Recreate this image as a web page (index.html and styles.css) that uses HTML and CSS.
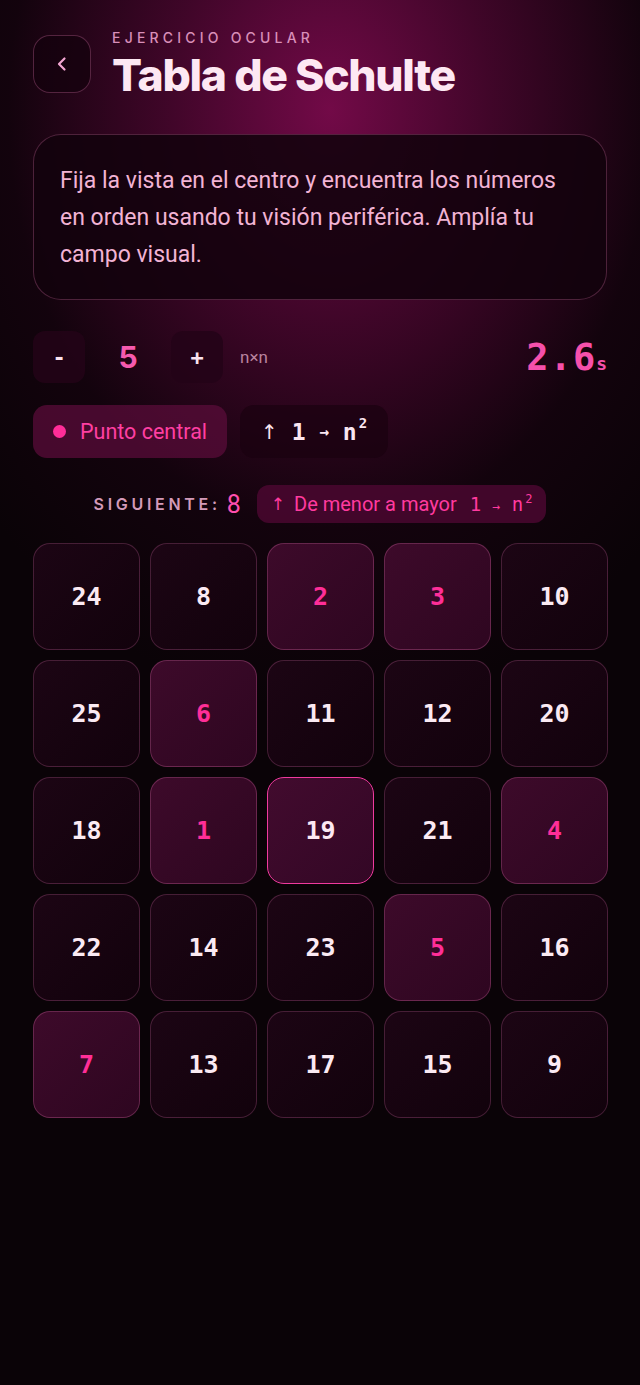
FILE: index.html
```html
<!DOCTYPE html>
<html lang="es">
<head>
<meta charset="utf-8">
<title>Tabla de Schulte</title>
<link rel="stylesheet" href="styles.css">
</head>
<body>
<div class="page">
  <header class="header">
    <button class="back" aria-label="Volver">
      <svg width="14" height="18" viewBox="0 0 14 18"><path d="M9.5 3.5 L4 9 L9.5 14.5" fill="none" stroke="#f3a6d2" stroke-width="2.2" stroke-linecap="round" stroke-linejoin="round"/></svg>
    </button>
    <div class="titles">
      <div class="eyebrow">EJERCICIO OCULAR</div>
      <h1 class="title">Tabla de Schulte</h1>
    </div>
  </header>

  <section class="card">
    <p>Fija la vista en el centro y encuentra los números en orden usando tu visión periférica. Amplía tu campo visual.</p>
  </section>

  <div class="controls">
    <button class="step">-</button>
    <span class="size">5</span>
    <button class="step">+</button>
    <span class="nxn">n×n</span>
    <span class="timer">2.6<small>s</small></span>
  </div>

  <div class="toggles">
    <div class="pill-on"><span class="dot"></span>Punto central</div>
    <div class="chip"><span class="arr">↑</span> 1 <span class="sm">→</span> n<span class="sup">2</span></div>
  </div>

  <div class="next">
    <span class="next-label">SIGUIENTE:</span>
    <span class="next-num">8</span>
    <span class="order"><span class="oarr">↑</span> De menor a mayor <span class="om">1 <span class="sm2">→</span> n<span class="sup2">2</span></span></span>
  </div>

  <div class="grid">
    <div class="cell">24</div>
    <div class="cell">8</div>
    <div class="cell found">2</div>
    <div class="cell found">3</div>
    <div class="cell">10</div>

    <div class="cell">25</div>
    <div class="cell found">6</div>
    <div class="cell">11</div>
    <div class="cell">12</div>
    <div class="cell">20</div>

    <div class="cell">18</div>
    <div class="cell found">1</div>
    <div class="cell center">19</div>
    <div class="cell">21</div>
    <div class="cell found">4</div>

    <div class="cell">22</div>
    <div class="cell">14</div>
    <div class="cell">23</div>
    <div class="cell found">5</div>
    <div class="cell">16</div>

    <div class="cell found">7</div>
    <div class="cell">13</div>
    <div class="cell">17</div>
    <div class="cell">15</div>
    <div class="cell">9</div>
  </div>
</div>
</body>
</html>
```

FILE: styles.css
```css
* { box-sizing: border-box; }
html, body { margin: 0; padding: 0; }
body {
  min-height: 1385px;
  background:
    radial-gradient(ellipse 460px 600px at 330px 110px, rgba(120, 10, 75, 0.95) 0%, rgba(85, 7, 54, 0.72) 35%, rgba(35, 3, 24, 0.35) 70%, rgba(10, 2, 8, 0) 100%),
    #0a0307;
  font-family: Roboto, "Noto Sans", sans-serif;
  color: #f3c6dd;
}
.page { padding: 28px 33px 0 33px; }

.header { display: flex; align-items: center; gap: 21px; }
.back {
  width: 58px; height: 58px; flex: none;
  border-radius: 17px;
  border: 1px solid rgba(230, 120, 180, 0.3);
  background: rgba(20, 2, 14, 0.75);
  display: flex; align-items: center; justify-content: center;
  padding: 0;
}
.titles { display: flex; flex-direction: column; }
.eyebrow {
  font-family: Inter, sans-serif;
  font-size: 14px; font-weight: 500;
  letter-spacing: 4.2px;
  color: #d98fb9;
  line-height: 20px;
}
.title {
  margin: 2px 0 0 0;
  font-family: Inter, sans-serif;
  font-weight: 800;
  font-size: 44.5px;
  letter-spacing: -1.3px;
  line-height: 50px;
  color: #fde8f3;
}

.card {
  margin-top: 34px;
  border: 1px solid rgba(230, 120, 180, 0.28);
  border-radius: 28px;
  background: rgba(18, 2, 12, 0.88);
  padding: 27px 24px 26px 26px;
}
.card p {
  margin: 0;
  font-size: 23px;
  line-height: 37px;
  color: #f2b3d4;
}

.controls {
  margin-top: 31px;
  display: flex; align-items: center;
  height: 52px;
}
.step {
  width: 52px; height: 52px;
  border: none; border-radius: 12px;
  background: rgba(35, 4, 24, 0.85);
  color: #fbe3ef;
  font-family: "DejaVu Sans Mono", monospace;
  font-weight: bold;
  font-size: 22px;
  padding: 0;
}
.size {
  width: 86px; text-align: center;
  font-family: Inter, sans-serif; font-weight: 700;
  font-size: 30px; color: #f55aae;
}
.nxn { margin-left: 17px; font-size: 17px; color: #b9839f; }
.timer {
  margin-left: auto;
  font-family: "DejaVu Sans Mono", monospace;
  font-weight: bold;
  font-size: 37px;
  color: #f550ab;
  letter-spacing: 1px;
}
.timer small { font-size: 18px; letter-spacing: 0; }

.toggles { margin-top: 22px; display: flex; gap: 13px; height: 53px; }
.pill-on {
  display: flex; align-items: center; gap: 14px;
  padding: 0 20px 0 20px;
  border-radius: 14px;
  background: rgba(90, 12, 58, 0.75);
  color: #ff3fa2;
  font-size: 21.5px;
}
.dot { width: 13px; height: 13px; border-radius: 50%; background: #ff2d98; }
.chip {
  display: flex; align-items: center; gap: 0;
  padding: 0 21px;
  border-radius: 14px;
  background: rgba(25, 2, 16, 0.7);
  color: #fbe6f1;
  font-family: "DejaVu Sans Mono", monospace;
  font-weight: bold;
  font-size: 23px;
  white-space: pre;
}
.chip .arr { font-weight: normal; font-family: "DejaVu Sans", sans-serif; font-size: 20px; }
.chip .sm { font-size: 16px; }
.chip .sup { font-size: 14px; position: relative; top: -9px; margin-left: 2px; }

.next {
  margin-top: 27px;
  display: flex; align-items: center; justify-content: center;
  height: 38px;
}
.next-label {
  font-family: Inter, sans-serif; font-weight: 600;
  font-size: 16px; letter-spacing: 3.7px;
  color: #d49ab9;
}
.next-num { margin-left: 6px; font-size: 25px; color: #ff4fae; }
.order {
  margin-left: 16px;
  height: 38px;
  display: flex; align-items: center;
  padding: 0 14px;
  border-radius: 12px;
  background: rgba(78, 8, 50, 0.8);
  color: #ff3a9f;
  font-size: 20px;
  white-space: pre;
}
.order .oarr { font-family: "DejaVu Sans", sans-serif; font-size: 17px; margin-right: 4px; }
.order .om { margin-left: 8px; font-family: "DejaVu Sans Mono", monospace; font-size: 19px; }
.order .sm2 { font-size: 13px; }
.order .sup2 { font-size: 12px; position: relative; top: -8px; margin-left: 2px; }

.grid {
  margin-top: 20px;
  display: grid;
  grid-template-columns: repeat(5, 107px);
  grid-auto-rows: 107px;
  column-gap: 10px;
  row-gap: 10px;
}
.cell {
  display: flex; align-items: center; justify-content: center;
  border-radius: 17px;
  border: 1px solid rgba(210, 110, 165, 0.26);
  background: linear-gradient(135deg, #1c0514 0%, #12020c 100%);
  color: #fbeaf3;
  font-family: "DejaVu Sans Mono", monospace;
  font-weight: bold;
  font-size: 25px;
}
.cell.found {
  background: linear-gradient(135deg, #3d0a2a 0%, #2e0620 100%);
  border-color: rgba(220, 110, 170, 0.3);
  color: #ff2e98;
}
.cell.center {
  background: linear-gradient(135deg, #420b2e 0%, #330725 100%);
  border: 1.5px solid #f03a9e;
  color: #fde8f3;
}
```
